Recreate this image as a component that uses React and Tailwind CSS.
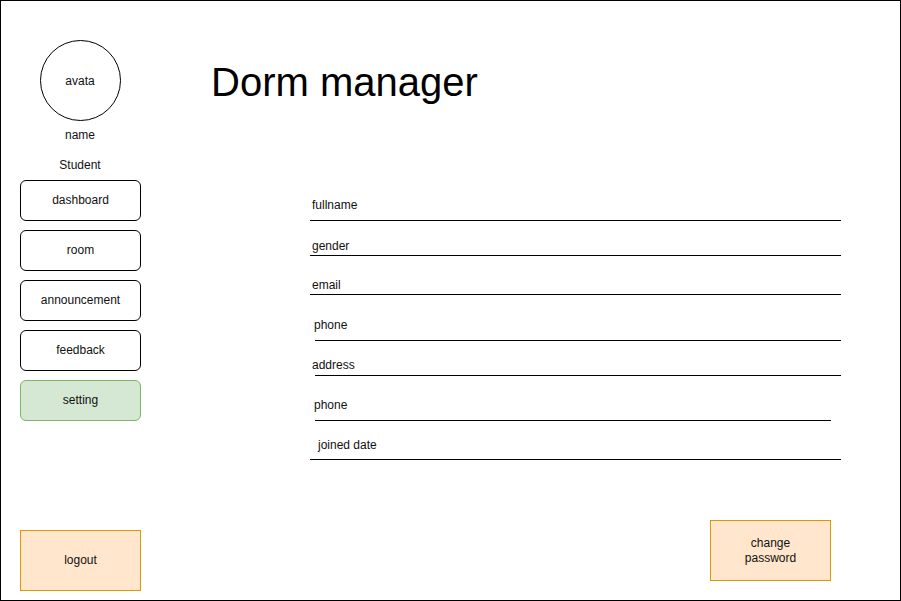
const navItems = [
  { label: 'dashboard' },
  { label: 'room' },
  { label: 'announcement' },
  { label: 'feedback' },
  { label: 'setting', active: true },
];

const fields = [
  { label: 'fullname', row: 'mt-[93px]', text: 'pl-[152px]', line: 'mt-[8px] ml-[150px] w-[531px]' },
  { label: 'gender', row: 'mt-[18px]', text: 'pl-[152px]', line: 'mt-[2px] ml-[150px] w-[531px]' },
  { label: 'email', row: 'mt-[22px]', text: 'pl-[152px]', line: 'mt-[2px] ml-[150px] w-[531px]' },
  { label: 'phone', row: 'mt-[23px]', text: 'pl-[154px]', line: 'mt-[8px] ml-[155px] w-[526px]' },
  { label: 'address', row: 'mt-[17px]', text: 'pl-[152px]', line: 'mt-[3px] ml-[155px] w-[526px]' },
  { label: 'phone', row: 'mt-[22px]', text: 'pl-[154px]', line: 'mt-[8px] ml-[155px] w-[516px]' },
  { label: 'joined date', row: 'mt-[17px]', text: 'pl-[158px]', line: 'mt-[7px] ml-[150px] w-[531px]' },
];

export default function App() {
  return (
    <div className="w-[901px] h-[601px] border border-black bg-white flex font-['Liberation_Sans',Arial,sans-serif] text-[12px] text-[#111]">
      {/* Sidebar */}
      <div className="w-[159px] flex flex-col pl-[19px] pt-[39px] pb-[9px]">
        <div className="w-[120px] flex flex-col items-center">
          <div className="w-[81px] h-[81px] rounded-full border border-black flex items-center justify-center">
            avata
          </div>
          <div className="mt-[7px] leading-[14px]">name</div>
          <div className="mt-[16px] leading-[14px]">Student</div>
        </div>
        <div className="mt-[8px] flex flex-col gap-[9px]">
          {navItems.map((item) => (
            <div
              key={item.label}
              className={
                item.active
                  ? 'w-[121px] h-[41px] pb-[2px] rounded-[6px] border border-[#82b366] bg-[#d5e8d4] flex items-center justify-center'
                  : 'w-[121px] h-[41px] pb-[2px] rounded-[6px] border border-black bg-white flex items-center justify-center'
              }
            >
              {item.label}
            </div>
          ))}
        </div>
        <div className="mt-auto w-[121px] h-[61px] pb-[1px] border border-[#d79b00] bg-[#ffe6cc] flex items-center justify-center">
          logout
        </div>
      </div>

      {/* Main */}
      <div className="flex-1 flex flex-col">
        <div className="mt-[58px] ml-[51px] text-[40px] leading-[46px] text-black">Dorm manager</div>

        {fields.map((f, i) => (
          <div key={i} className={f.row}>
            <div className={`leading-[14px] ${f.text}`}>{f.label}</div>
            <div className={`h-px bg-black ${f.line}`} />
          </div>
        ))}

        <div className="mt-auto flex justify-end pr-[69px] pb-[19px]">
          <div className="w-[121px] h-[61px] border border-[#d79b00] bg-[#ffe6cc] flex items-center justify-center text-center leading-[15px]">
            change
            <br />
            password
          </div>
        </div>
      </div>
    </div>
  );
}
